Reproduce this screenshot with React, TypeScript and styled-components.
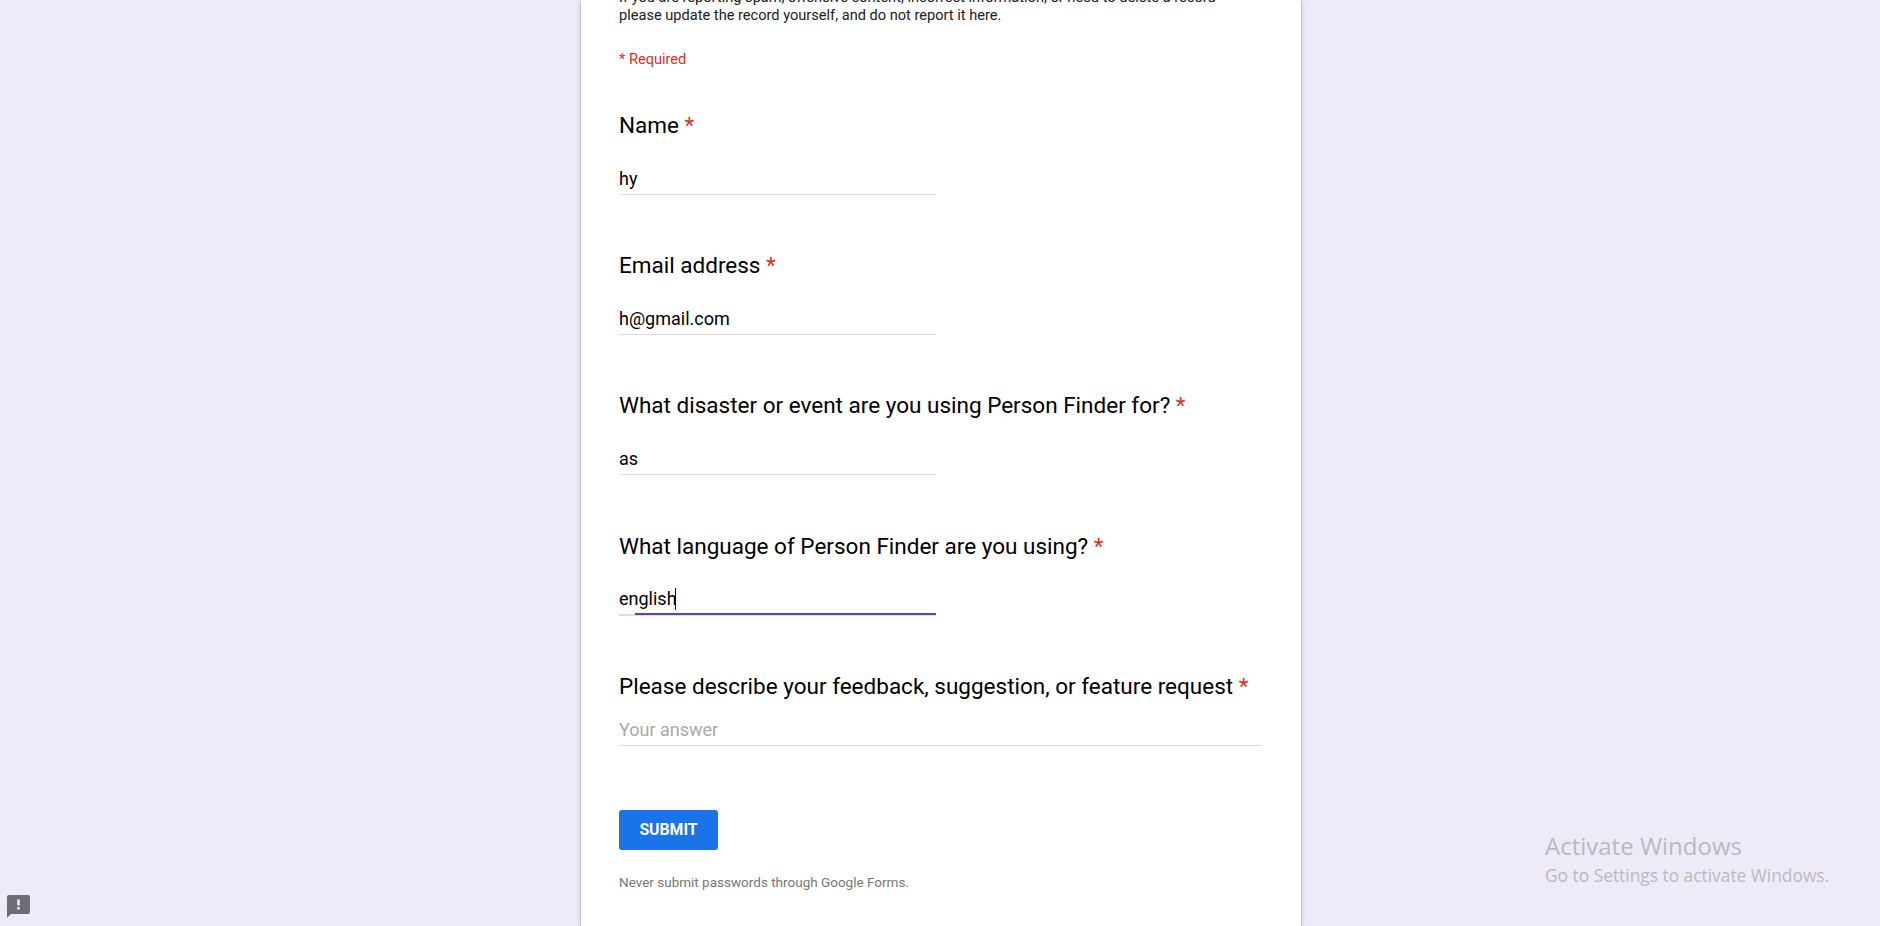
import React from "react";
import styled, { createGlobalStyle } from "styled-components";

const GlobalStyle = createGlobalStyle`
  body {
    margin: 0;
    background: #eeeaf8;
    font-family: Roboto, "Liberation Sans", sans-serif;
    overflow: hidden;
  }
`;

const Page = styled.div`
  position: relative;
  display: flex;
  justify-content: center;
  height: 926px;
  overflow: hidden;
`;

const Card = styled.main`
  box-sizing: border-box;
  width: 720px;
  margin-left: 2px;
  height: 926px;
  padding: 0 38px;
  background: #fff;
  box-shadow: 0 2px 2px rgba(0, 0, 0, 0.14), 0 3px 1px -2px rgba(0, 0, 0, 0.12),
    0 1px 5px rgba(0, 0, 0, 0.2), 0 0 1px rgba(0, 0, 0, 0.2);
`;

const Description = styled.p`
  margin: -12px 0 0;
  font-size: 14.6px;
  line-height: 18px;
  color: #212121;
  white-space: pre;
`;

const RequiredNote = styled.div`
  margin-top: 25px;
  font-size: 14.6px;
  line-height: 20px;
  color: #d93025;
`;

const Questions = styled.form`
  display: flex;
  flex-direction: column;
  margin-top: 42px;
`;

const Question = styled.div<{ $gap?: number }>`
  margin-bottom: ${(p) => p.$gap ?? 56}px;
`;

const Title = styled.label`
  display: block;
  font-size: 22.5px;
  line-height: 28px;
  color: #000;
  white-space: nowrap;
`;

const Star = styled.span`
  color: #d93025;
`;

const Field = styled.div<{ $long?: boolean; $focused?: boolean }>`
  position: relative;
  display: flex;
  align-items: center;
  box-sizing: border-box;
  width: ${(p) => (p.$long ? 643 : 317)}px;
  height: 28px;
  margin-top: ${(p) => (p.$long ? 18 : 28)}px;
  padding-bottom: ${(p) => (p.$focused ? 4 : 3)}px;
  border-bottom: ${(p) => (p.$focused ? 2 : 1)}px solid #dedede;
  font-size: 18px;
  line-height: 24px;
  color: ${(p) => (p.$long ? "#a9a9a9" : "#000")};
`;

const Caret = styled.span`
  position: absolute;
  left: 56px;
  top: 0;
  width: 1px;
  height: 22px;
  background: #000;
`;

const FocusLine = styled.span`
  position: absolute;
  right: 0;
  bottom: -1px;
  width: 301px;
  height: 2px;
  background: #673ab7;
`;

const Submit = styled.button`
  width: 99px;
  height: 40px;
  padding: 0;
  border: 0;
  border-radius: 3px;
  background: #1a73e8;
  color: #fff;
  font: 700 15.8px/40px Roboto, sans-serif;
`;

const Notice = styled.div`
  margin-top: 22px;
  font-size: 13.5px;
  line-height: 20px;
  color: #777;
`;

const ReportIcon = styled.svg`
  position: absolute;
  left: 7px;
  top: 895px;
`;

const Watermark = styled.aside`
  position: absolute;
  left: 1545px;
  top: 830px;
  font-family: "Open Sans", "Noto Sans", sans-serif;
  color: #bababa;
  white-space: nowrap;
`;

const WatermarkTitle = styled.div`
  font-size: 24px;
  line-height: 32px;
`;

const WatermarkText = styled.div`
  font-size: 17.35px;
  line-height: 27px;
`;

const questions = [
  { title: "Name", value: "hy" },
  { title: "Email address", value: "h@gmail.com" },
  { title: "What disaster or event are you using Person Finder for?", value: "as", gap: 57 },
  { title: "What language of Person Finder are you using?", value: "english", focused: true },
];

export default function App() {
  return (
    <Page>
      <GlobalStyle />
      <Card>
        <Description>
          {"If you are reporting spam, offensive content, incorrect information, or need to delete a record\nplease update the record yourself, and do not report it here."}
        </Description>
        <RequiredNote>* Required</RequiredNote>
        <Questions>
          {questions.map((q) => (
            <Question key={q.title} $gap={q.gap}>
              <Title>
                {q.title} <Star>*</Star>
              </Title>
              <Field $focused={q.focused}>
                {q.value}
                {q.focused && <Caret />}
                {q.focused && <FocusLine />}
              </Field>
            </Question>
          ))}
          <Question $gap={64}>
            <Title>
              Please describe your feedback, suggestion, or feature request <Star>*</Star>
            </Title>
            <Field $long>Your answer</Field>
          </Question>
          <Submit type="button">SUBMIT</Submit>
        </Questions>
        <Notice>Never submit passwords through Google Forms.</Notice>
      </Card>
      <ReportIcon width="23" height="23" viewBox="0 0 23 23">
        <path d="M2 0h19a2 2 0 0 1 2 2v15a2 2 0 0 1-2 2H4l-4 4V2a2 2 0 0 1 2-2z" fill="#6f6d74" />
        <path d="M10.2 4.5h2.6v6h-2.6zM10.2 12h2.6v2.4h-2.6z" fill="#eeeaf8" />
      </ReportIcon>
      <Watermark>
        <WatermarkTitle>Activate Windows</WatermarkTitle>
        <WatermarkText>Go to Settings to activate Windows.</WatermarkText>
      </Watermark>
    </Page>
  );
}
